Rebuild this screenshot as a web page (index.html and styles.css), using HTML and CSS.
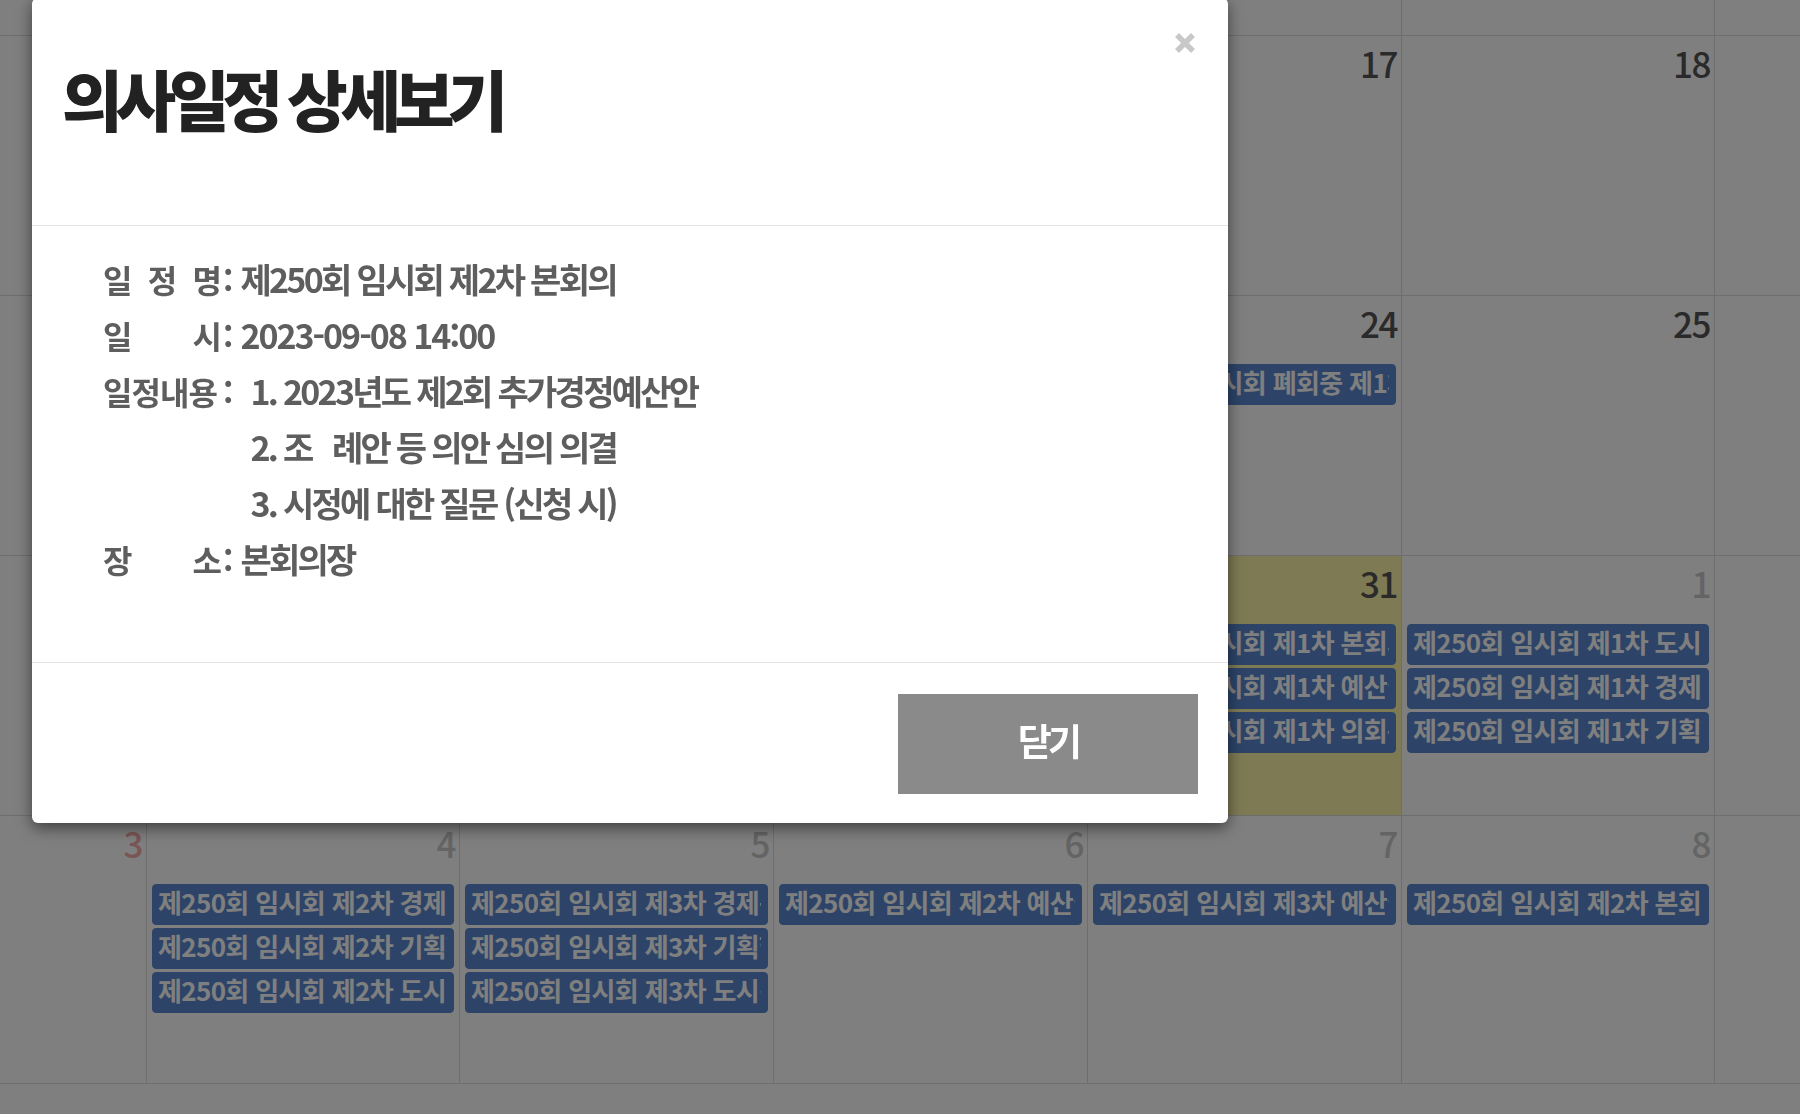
FILE: index.html
```html
<!DOCTYPE html>
<html lang="ko">
<head>
<meta charset="utf-8">
<title>의사일정 상세보기</title>
<link rel="stylesheet" href="styles.css">
</head>
<body>
<div class="page">
  <div class="calendar">
    <div class="week">
      <div class="day sun"></div>
      <div class="day"></div>
      <div class="day"></div>
      <div class="day"></div>
      <div class="day"></div>
      <div class="day"></div>
      <div class="day sat"></div>
    </div>
    <div class="week">
      <div class="day sun"></div>
      <div class="day"></div>
      <div class="day"></div>
      <div class="day"></div>
      <div class="day"><span class="num">17</span></div>
      <div class="day"><span class="num">18</span></div>
      <div class="day sat"></div>
    </div>
    <div class="week">
      <div class="day sun"></div>
      <div class="day"></div>
      <div class="day"></div>
      <div class="day"></div>
      <div class="day"><span class="num">24</span>
        <div class="events">
          <div class="ev"><span class="ev-title">제250회 임시회 폐회중 제1차 상임위원회</span></div>
        </div>
      </div>
      <div class="day"><span class="num">25</span></div>
      <div class="day sat"></div>
    </div>
    <div class="week">
      <div class="day sun"></div>
      <div class="day"></div>
      <div class="day"></div>
      <div class="day"></div>
      <div class="day today"><span class="num">31</span>
        <div class="events">
          <div class="ev"><span class="ev-title">제250회 임시회 제1차 본회의</span></div>
          <div class="ev"><span class="ev-title">제250회 임시회 제1차 예산결산특별위원회</span></div>
          <div class="ev"><span class="ev-title">제250회 임시회 제1차 의회운영위원회</span></div>
        </div>
      </div>
      <div class="day other"><span class="num">1</span>
        <div class="events">
          <div class="ev"><span class="ev-title">제250회 임시회 제1차 도시건설위원회</span></div>
          <div class="ev"><span class="ev-title">제250회 임시회 제1차 경제문화위원회</span></div>
          <div class="ev"><span class="ev-title">제250회 임시회 제1차 기획행정위원회</span></div>
        </div>
      </div>
      <div class="day other sat"></div>
    </div>
    <div class="week week-last">
      <div class="day other sun"><span class="num">3</span></div>
      <div class="day other"><span class="num">4</span>
        <div class="events">
          <div class="ev"><span class="ev-title">제250회 임시회 제2차 경제문화위원회</span></div>
          <div class="ev"><span class="ev-title">제250회 임시회 제2차 기획행정위원회</span></div>
          <div class="ev"><span class="ev-title">제250회 임시회 제2차 도시건설위원회</span></div>
        </div>
      </div>
      <div class="day other"><span class="num">5</span>
        <div class="events">
          <div class="ev"><span class="ev-title">제250회 임시회 제3차 경제문화위원회</span></div>
          <div class="ev"><span class="ev-title">제250회 임시회 제3차 기획행정위원회</span></div>
          <div class="ev"><span class="ev-title">제250회 임시회 제3차 도시건설위원회</span></div>
        </div>
      </div>
      <div class="day other"><span class="num">6</span>
        <div class="events">
          <div class="ev"><span class="ev-title">제250회 임시회 제2차 예산결산특별위원회</span></div>
        </div>
      </div>
      <div class="day other"><span class="num">7</span>
        <div class="events">
          <div class="ev"><span class="ev-title">제250회 임시회 제3차 예산결산특별위원회</span></div>
        </div>
      </div>
      <div class="day other"><span class="num">8</span>
        <div class="events">
          <div class="ev"><span class="ev-title">제250회 임시회 제2차 본회의</span></div>
        </div>
      </div>
      <div class="day other sat"></div>
    </div>
  </div>
</div>

<div class="backdrop"></div>

<div class="modal">
  <div class="modal-header">
    <h1 class="modal-title">의사일정 상세보기</h1>
    <button class="close" type="button" aria-label="닫기">
      <svg width="22" height="22" viewBox="0 0 22 22"><path d="M3 3 L19 19 M19 3 L3 19" stroke="#c8c8c8" stroke-width="5.5" fill="none"/></svg>
    </button>
  </div>
  <div class="modal-body">
    <div class="field"><span class="label">일 정 명</span><span class="colon">:</span><span class="value">제250회 임시회 제2차 본회의</span></div>
    <div class="field"><span class="label">일 시</span><span class="colon">:</span><span class="value value-num">2023-09-08 14:00</span></div>
    <div class="field"><span class="label">일정내용</span><span class="colon">:</span>
      <div class="value items">
        <div>1. 2023년도 제2회 추가경정예산안</div>
        <div>2. 조&nbsp;&nbsp;&nbsp;례안 등 의안 심의 의결</div>
        <div>3. 시정에 대한 질문 (신청 시)</div>
      </div>
    </div>
    <div class="field"><span class="label">장 소</span><span class="colon">:</span><span class="value">본회의장</span></div>
  </div>
  <div class="modal-footer">
    <button class="btn" type="button">닫기</button>
  </div>
</div>
</body>
</html>
```

FILE: styles.css
```css
* { box-sizing: border-box; }

html, body {
  margin: 0;
  padding: 0;
  height: 100%;
  overflow: hidden;
}

body {
  font-family: "Noto Sans CJK KR", "Noto Sans", sans-serif;
  background: #fff;
  color: #333;
}

.page {
  height: 100%;
  overflow: hidden;
}

/* ---------- calendar ---------- */
.calendar {
  margin: -224px 0 0 -167px;
  width: 2200px;
}

.week {
  display: grid;
  grid-template-columns: 314px 313px 314px 314px 314px 313px 314px;
  height: 260px;
}

.week-last { height: 268px; }

.day {
  border-right: 1px solid #ddd;
  border-bottom: 1px solid #ddd;
  padding-top: 7px;
  overflow: hidden;
}

.today { background: #fdf5a9; }

.num {
  display: block;
  text-align: right;
  padding-right: 4px;
  font-size: 35px;
  line-height: 40px;
  font-weight: 500;
  letter-spacing: -0.04em;
  color: #555;
}

.other .num { color: #c8c8c8; }
.other.sun .num { color: #f5aaaa; }

.events {
  margin-top: 21px;
  display: flex;
  flex-direction: column;
  gap: 3px;
}

.ev {
  margin: 0 5px;
  height: 41px;
  padding: 0 6px 5px 5px;
  background: #5a88d0;
  border: 1px solid #5a88d0;
  border-radius: 4px;
  color: #fff;
  font-size: 26px;
  line-height: 34px;
  font-weight: 700;
  letter-spacing: -0.025em;
}

.ev-title {
  display: block;
  white-space: nowrap;
  overflow: hidden;
}

/* ---------- modal ---------- */
.backdrop {
  position: fixed;
  inset: 0;
  background: rgba(0, 0, 0, 0.5);
}

.modal {
  position: absolute;
  left: 32px;
  top: -2px;
  width: 1196px;
  background: #fff;
  border-radius: 6px;
  box-shadow: 0 5px 15px rgba(0, 0, 0, 0.5);
}

.modal-header {
  height: 228px;
  padding: 34px 32px 0 30px;
  border-bottom: 1px solid #e5e5e5;
  display: flex;
  justify-content: space-between;
  align-items: flex-start;
}

.modal-title {
  margin: 30px 0 0 0;
  font-size: 66px;
  line-height: 70px;
  font-weight: 900;
  letter-spacing: -0.11em;
  color: #222;
}

.close {
  border: 0;
  padding: 0;
  background: none;
  width: 22px;
  height: 22px;
  display: block;
  cursor: pointer;
}

.close svg { display: block; }

.modal-body {
  height: 436px;
  padding: 25px 30px 0 71px;
}

.field {
  display: flex;
  align-items: flex-start;
  font-size: 34px;
  line-height: 56px;
  color: #5e5e5e;
}

.label {
  flex: none;
  width: 118px;
  font-size: 32px;
  text-align: justify;
  text-align-last: justify;
  font-weight: 700;
  letter-spacing: -0.03em;
  white-space: nowrap;
}

.colon {
  flex: none;
  font-size: 32px;
  margin: 0 7px 0 2px;
  font-weight: 700;
}

.value {
  font-weight: 600;
  letter-spacing: -0.08em;
}

.value-num { letter-spacing: -0.06em; }

.items { margin-left: 10px; }

.modal-footer {
  height: 161px;
  border-top: 1px solid #e5e5e5;
  padding: 31px 30px 0 0;
  display: flex;
  justify-content: flex-end;
  align-items: flex-start;
}

.btn {
  width: 300px;
  height: 100px;
  border: 0;
  background: #8a8a8a;
  color: #fff;
  font-family: inherit;
  font-size: 37px;
  font-weight: 700;
  letter-spacing: -0.1em;
  padding: 0 0 8px 0;
  cursor: pointer;
}
```
